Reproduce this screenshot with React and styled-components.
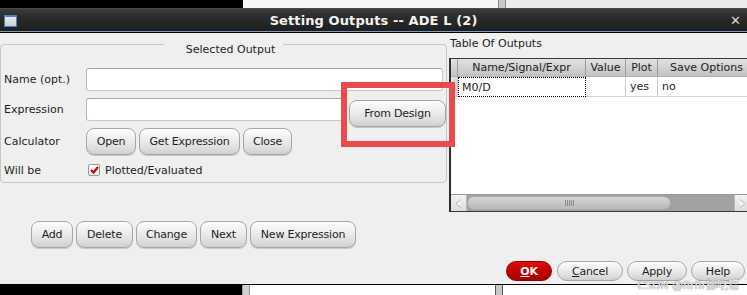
import React from "react";
import styled, { createGlobalStyle } from "styled-components";

const GlobalStyle = createGlobalStyle`
    html, body {
        margin: 0;
        padding: 0;
        background: #ffffff;
    }
    body {
        font-family: "DejaVu Sans", "Liberation Sans", sans-serif;
        font-size: 11px;
        color: #1e1e1e;
    }
`;

const Screen = styled.div`
    width: 747px;
    height: 295px;
    overflow: hidden;
    display: flex;
    flex-direction: column;
`;

const Strip = styled.div`
    display: flex;
    height: ${(props) => props.h}px;
    flex-shrink: 0;
    border-top: ${(props) => (props.bordered ? "1px solid #000" : "none")};
`;

const StripPart = styled.div`
    width: ${(props) => (props.w ? `${props.w}px` : "auto")};
    flex: ${(props) => (props.w ? "none" : 1)};
    background: ${(props) => props.bg};
    border-left: ${(props) => (props.edge ? `1px solid ${props.edge}` : "none")};
    border-right: ${(props) => (props.edge ? `1px solid ${props.edge}` : "none")};
`;

const Window = styled.div`
    flex: 1;
    display: flex;
    flex-direction: column;
    min-height: 0;
`;

const TitleBar = styled.div`
    height: 22px;
    flex-shrink: 0;
    display: flex;
    align-items: center;
    padding: 0 6px 0 4px;
    background: linear-gradient(#3c3c3c, #2a2a2a 40%, #1f1f1f);
    border-top: 1px solid #4a4a4a;
    border-bottom: 1px solid #7d9ab8;
    box-shadow: 0 1px 0 #000;
    position: relative;
    z-index: 1;
`;

const WindowIcon = styled.div`
    width: 11px;
    height: 9px;
    background: linear-gradient(#e6e9ee, #c9ced6);
    border: 1px solid #4f7fc4;
    border-top-width: 2px;
    margin-top: 2px;
`;

const Title = styled.div`
    flex: 1;
    text-align: center;
    color: #f2f2f2;
    font-weight: bold;
    font-size: 13px;
    letter-spacing: 0.1px;
`;

const CloseGlyph = styled.div`
    color: #d8d8d8;
    font-weight: bold;
    font-size: 13px;
    line-height: 13px;
`;

const Body = styled.div`
    flex: 1;
    background: #efefef;
    display: flex;
    flex-direction: column;
    position: relative;
    margin-top: 1px;
`;

const Main = styled.div`
    display: flex;
    gap: 2px;
`;

const LeftCol = styled.div`
    width: 447px;
    flex-shrink: 0;
    display: flex;
    flex-direction: column;
`;

const GroupBox = styled.fieldset`
    margin: 1px 0 0 0;
    padding: 13px 3px 4px 3px;
    border: 1px solid #c6c6c6;
    border-radius: 4px;
    min-width: 0;
`;

const GroupTitle = styled.legend`
    margin: 0 auto;
    padding: 10px 8px 0 22px;
    line-height: 11px;
    font-size: 11px;
    color: #1e1e1e;
`;

const FormGrid = styled.div`
    display: grid;
    grid-template-columns: 82px 1fr;
    grid-template-rows: 23px 23px 27px 16px;
    row-gap: 7px;
    align-items: center;
`;

const Label = styled.span`
    font-size: 11px;
    white-space: nowrap;
`;

const Field = styled.div`
    height: 23px;
    box-sizing: border-box;
    background: #ffffff;
    border: 1px solid #c8c8c8;
    border-top-color: #a4a4a4;
    border-left-color: #b4b4b4;
    border-radius: 3px;
    flex: 1;
`;

const FieldRow = styled.div`
    display: flex;
    gap: 6px;
    height: 23px;
    align-items: flex-start;
`;

const ButtonRow = styled.div`
    display: flex;
    gap: 3px;
    margin-left: ${(props) => props.indent || 0}px;
    margin-top: ${(props) => props.top || 0}px;
`;

const Button = styled.button`
    width: ${(props) => props.w}px;
    height: ${(props) => props.h || 27}px;
    flex-shrink: 0;
    box-sizing: border-box;
    padding: 0;
    margin-top: ${(props) => props.mt || 0}px;
    margin-right: ${(props) => props.mr || 0}px;
    font-family: "DejaVu Sans", "Liberation Sans", sans-serif;
    font-size: 11px;
    letter-spacing: -0.2px;
    color: #1e1e1e;
    background: linear-gradient(#fcfcfc, #ececec 45%, #dcdcdc 80%, #cfcfcf);
    border: 1px solid #a6a6a6;
    border-radius: ${(props) => props.r || 8}px;
    box-shadow: inset 0 1px 0 #ffffff, 0 1px 0 #c9c9c9;
    position: relative;
    z-index: 1;
`;

const CheckLine = styled.label`
    display: flex;
    align-items: center;
    gap: 5px;
    padding-left: 2px;
`;

const CheckBox = styled.span`
    width: 12px;
    height: 12px;
    box-sizing: border-box;
    background: linear-gradient(#ffffff, #ececec);
    border: 1px solid #9c9c9c;
    border-radius: 2px;
    display: flex;
    align-items: center;
    justify-content: center;
`;

const RightCol = styled.div`
    flex: 1;
    min-width: 0;
    overflow: hidden;
    display: flex;
    flex-direction: column;
`;

const TableLabel = styled.div`
    line-height: 14px;
    margin: 4px 0 7px 1px;
`;

const TableFrame = styled.div`
    height: 154px;
    box-sizing: border-box;
    width: 320px;
    border: 1px solid #3a3a3a;
    border-left: 2px solid #2e2e2e;
    border-right: none;
    background: #ffffff;
    display: flex;
    flex-direction: column;
`;

const Grid = styled.div`
    display: grid;
    grid-template-columns: 7px 128px 40px 32px 98px;
`;

const HeadCell = styled.div`
    height: 18px;
    box-sizing: border-box;
    background: linear-gradient(#e2e2e2, #cfcfcf 60%, #c2c2c2);
    border-right: 1px solid ${(props) => (props.last ? "transparent" : "#9d9d9d")};
    border-bottom: 1px solid #b0b0b0;
    display: flex;
    align-items: center;
    justify-content: center;
    white-space: nowrap;
    color: #222;
`;

const Cell = styled.div`
    height: 20px;
    box-sizing: border-box;
    display: flex;
    align-items: center;
    padding-left: ${(props) => props.pad || 4}px;
    border-right: 1px solid ${(props) => (props.last ? "transparent" : "#c9c9c9")};
    border-bottom: 1px solid #d2d2d2;
    white-space: nowrap;
`;

const IndexCell = styled(Cell)`
    padding: 0;
    justify-content: center;
    color: #9a9a9a;
    font-size: 9px;
    background: linear-gradient(90deg, #e6e6e6, #d4d4d4);
    border-bottom: none;
    overflow: hidden;
`;

const FocusCell = styled(Cell)`
    border: 1px dotted #000;
    padding-left: 3px;
`;

const TableSpace = styled.div`
    flex: 1;
`;

const ScrollBar = styled.div`
    height: 16px;
    display: flex;
    background: #a2a2a2;
    border-top: 1px solid #9a9a9a;
    width: 298px;
`;

const ArrowButton = styled.div`
    width: ${(props) => props.w}px;
    background: linear-gradient(#f2f2f2, #dcdcdc);
    display: flex;
    align-items: center;
    justify-content: center;
    border-right: ${(props) => (props.left ? "1px solid #b8b8b8" : "none")};
    border-left: ${(props) => (props.left ? "none" : "1px solid #b8b8b8")};
`;

const Track = styled.div`
    flex: 1;
    display: flex;
    align-items: stretch;
    padding: 1px 0;
`;

const Thumb = styled.div`
    width: 202px;
    border-radius: 8px;
    background: linear-gradient(#d6d6d6, #c4c4c4 60%, #b8b8b8);
    border: 1px solid #a8a8a8;
    display: flex;
    align-items: center;
    justify-content: center;
    gap: 1px;
`;

const Grip = styled.span`
    width: 1px;
    height: 6px;
    background: #8a8a8a;
`;

const DialogButtons = styled.div`
    margin-top: auto;
    margin-bottom: 3px;
    display: flex;
    justify-content: flex-end;
    gap: 4px;
    padding-right: 2px;
`;

const PillButton = styled(Button)`
    border-radius: 10px;
    margin-right: ${(props) => (props.primary ? 1 : 0)}px;
    background: ${(props) =>
        props.primary
            ? "linear-gradient(#e01010, #c00000 50%, #a80000)"
            : "linear-gradient(#fcfcfc, #ececec 45%, #dcdcdc 80%, #cfcfcf)"};
    border-color: ${(props) => (props.primary ? "#8c0000" : "#a6a6a6")};
    color: ${(props) => (props.primary ? "#ffffff" : "#1e1e1e")};
    font-weight: ${(props) => (props.primary ? "bold" : "normal")};
    box-shadow: ${(props) => (props.primary ? "none" : "inset 0 1px 0 #ffffff")};
`;

const Mnemonic = styled.span`
    text-decoration: underline;
`;

const Highlight = styled.div`
    position: absolute;
    left: 341px;
    top: 49px;
    width: 114px;
    height: 65px;
    box-sizing: border-box;
    border: 6px solid #ea4a4c;
    z-index: 2;
    pointer-events: none;
`;

const Watermark = styled.div`
    position: absolute;
    right: 8px;
    bottom: -8px;
    font-family: "DejaVu Sans", "Noto Sans CJK SC", sans-serif;
    font-size: 11px;
    line-height: 12px;
    color: rgba(255, 255, 255, 0.85);
    text-shadow: 0 0 1px #8a8a8a, 0 0 1px #8a8a8a;
    z-index: 3;
    white-space: nowrap;
`;

const Arrow = ({ dir }) => (
    <svg width="7" height="9" viewBox="0 0 7 9">
        <path
            d={dir === "left" ? "M6 0.5 L1 4.5 L6 8.5" : "M1 0.5 L6 4.5 L1 8.5"}
            fill="#f4f4f4"
            stroke="#b4b4b4"
        />
    </svg>
);

const Check = () => (
    <svg width="9" height="8" viewBox="0 0 9 8">
        <path d="M1 4 L3.5 6.5 L8 1" fill="none" stroke="#d40000" strokeWidth="2.2" />
    </svg>
);

const App = () => (
    <>
        <GlobalStyle />
        <Screen>
            <Strip h={8}>
                <StripPart w={243} bg="#000" />
                <StripPart w={255} bg="#f6f6f6" />
                <StripPart w={6} bg="#c8c8c8" edge="#8a8a8a" />
                <StripPart bg="#ececec" />
            </Strip>
            <Window>
                <TitleBar>
                    <WindowIcon />
                    <Title>Setting Outputs -- ADE L (2)</Title>
                    <CloseGlyph>✕</CloseGlyph>
                </TitleBar>
                <Body>
                    <Main>
                        <LeftCol>
                            <GroupBox>
                                <GroupTitle>Selected Output</GroupTitle>
                                <FormGrid>
                                    <Label>Name (opt.)</Label>
                                    <Field />
                                    <Label>Expression</Label>
                                    <FieldRow>
                                        <Field />
                                        <Button w={97} mt={2} mr={-3}>
                                            From Design
                                        </Button>
                                    </FieldRow>
                                    <Label>Calculator</Label>
                                    <ButtonRow>
                                        <Button w={50}>Open</Button>
                                        <Button w={101}>Get Expression</Button>
                                        <Button w={49}>Close</Button>
                                    </ButtonRow>
                                    <Label>Will be</Label>
                                    <CheckLine>
                                        <CheckBox>
                                            <Check />
                                        </CheckBox>
                                        Plotted/Evaluated
                                    </CheckLine>
                                </FormGrid>
                            </GroupBox>
                            <ButtonRow indent={31} top={38}>
                                <Button w={42}>Add</Button>
                                <Button w={57}>Delete</Button>
                                <Button w={61}>Change</Button>
                                <Button w={47}>Next</Button>
                                <Button w={106}>New Expression</Button>
                            </ButtonRow>
                        </LeftCol>
                        <RightCol>
                            <TableLabel>Table Of Outputs</TableLabel>
                            <TableFrame>
                                <Grid>
                                    <HeadCell />
                                    <HeadCell>Name/Signal/Expr</HeadCell>
                                    <HeadCell>Value</HeadCell>
                                    <HeadCell>Plot</HeadCell>
                                    <HeadCell last>Save Options</HeadCell>
                                    <IndexCell>1</IndexCell>
                                    <FocusCell>M0/D</FocusCell>
                                    <Cell />
                                    <Cell>yes</Cell>
                                    <Cell last>no</Cell>
                                </Grid>
                                <TableSpace />
                                <ScrollBar>
                                    <ArrowButton w={15} left>
                                        <Arrow dir="left" />
                                    </ArrowButton>
                                    <Track>
                                        <Thumb>
                                            <Grip />
                                            <Grip />
                                            <Grip />
                                            <Grip />
                                            <Grip />
                                        </Thumb>
                                    </Track>
                                    <ArrowButton w={14}>
                                        <Arrow dir="right" />
                                    </ArrowButton>
                                </ScrollBar>
                            </TableFrame>
                        </RightCol>
                    </Main>
                    <DialogButtons>
                        <PillButton w={46} h={20} primary>
                            <Mnemonic>O</Mnemonic>K
                        </PillButton>
                        <PillButton w={66} h={20}>
                            <Mnemonic>C</Mnemonic>ancel
                        </PillButton>
                        <PillButton w={60} h={20}>
                            Apply
                        </PillButton>
                        <PillButton w={54} h={20}>
                            Help
                        </PillButton>
                    </DialogButtons>
                    <Highlight />
                    <Watermark>CSDN @firfir挪吃错</Watermark>
                </Body>
            </Window>
            <Strip h={10} bordered>
                <StripPart w={242} bg="#000" />
                <StripPart w={6} bg="#cfcfcf" edge="#9a9a9a" />
                <StripPart w={245} bg="#ffffff" />
                <StripPart w={6} bg="#c8c8c8" edge="#555" />
                <StripPart bg="#ffffff" />
            </Strip>
        </Screen>
    </>
);

export default App;
